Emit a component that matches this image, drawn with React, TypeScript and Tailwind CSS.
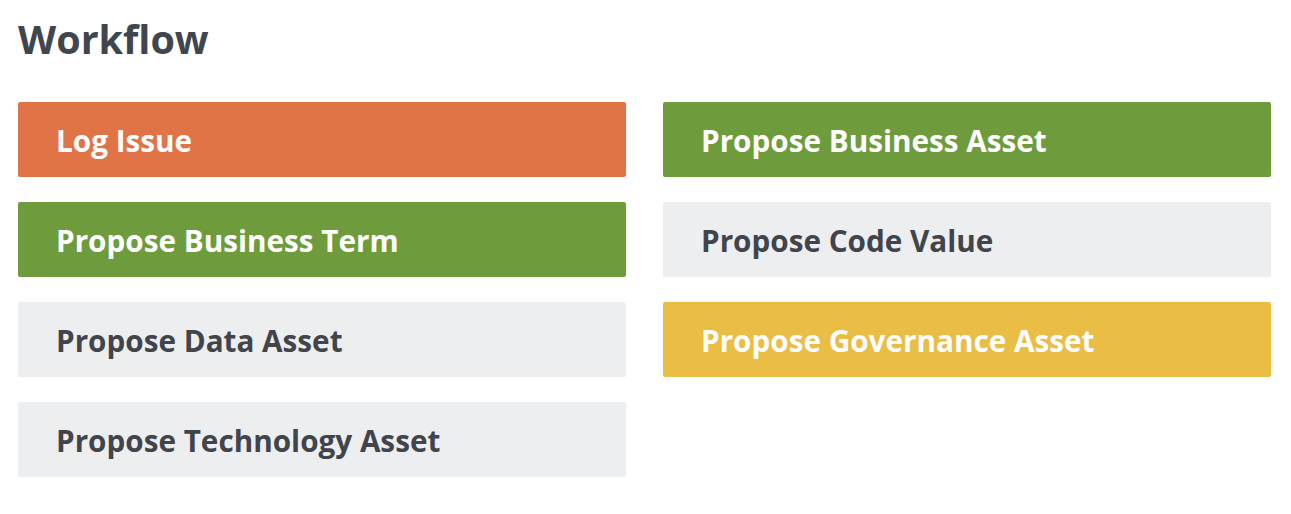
const ITEMS = [
  { label: "Log Issue", tone: "orange" },
  { label: "Propose Business Asset", tone: "green" },
  { label: "Propose Business Term", tone: "green" },
  { label: "Propose Code Value", tone: "gray" },
  { label: "Propose Data Asset", tone: "gray" },
  { label: "Propose Governance Asset", tone: "yellow" },
  { label: "Propose Technology Asset", tone: "gray" },
];

const TONES: Record<string, string> = {
  orange: "bg-[#e07447] text-white",
  green: "bg-[#6e9c3c] text-white",
  yellow: "bg-[#eabd45] text-white",
  gray: "bg-[#edeef0] text-[#41454b]",
};

export default function App() {
  return (
    <div className="w-[1291px] h-[514px] bg-white px-[18px] pt-[16px]" style={{ fontFamily: '"Open Sans", sans-serif' }}>
      <h1 className="text-[39.5px] leading-[47px] font-bold text-[#40464d]">Workflow</h1>
      <div className="mt-[39px] grid grid-cols-2 gap-x-[37px] gap-y-[25px] w-[1253px]">
        {ITEMS.map((item) => (
          <button
            key={item.label}
            className={`h-[75px] rounded-[2px] flex items-center pl-[38px] pt-[3px] text-left text-[29.7px] font-bold ${TONES[item.tone]}`}
          >
            {item.label}
          </button>
        ))}
      </div>
    </div>
  );
}
